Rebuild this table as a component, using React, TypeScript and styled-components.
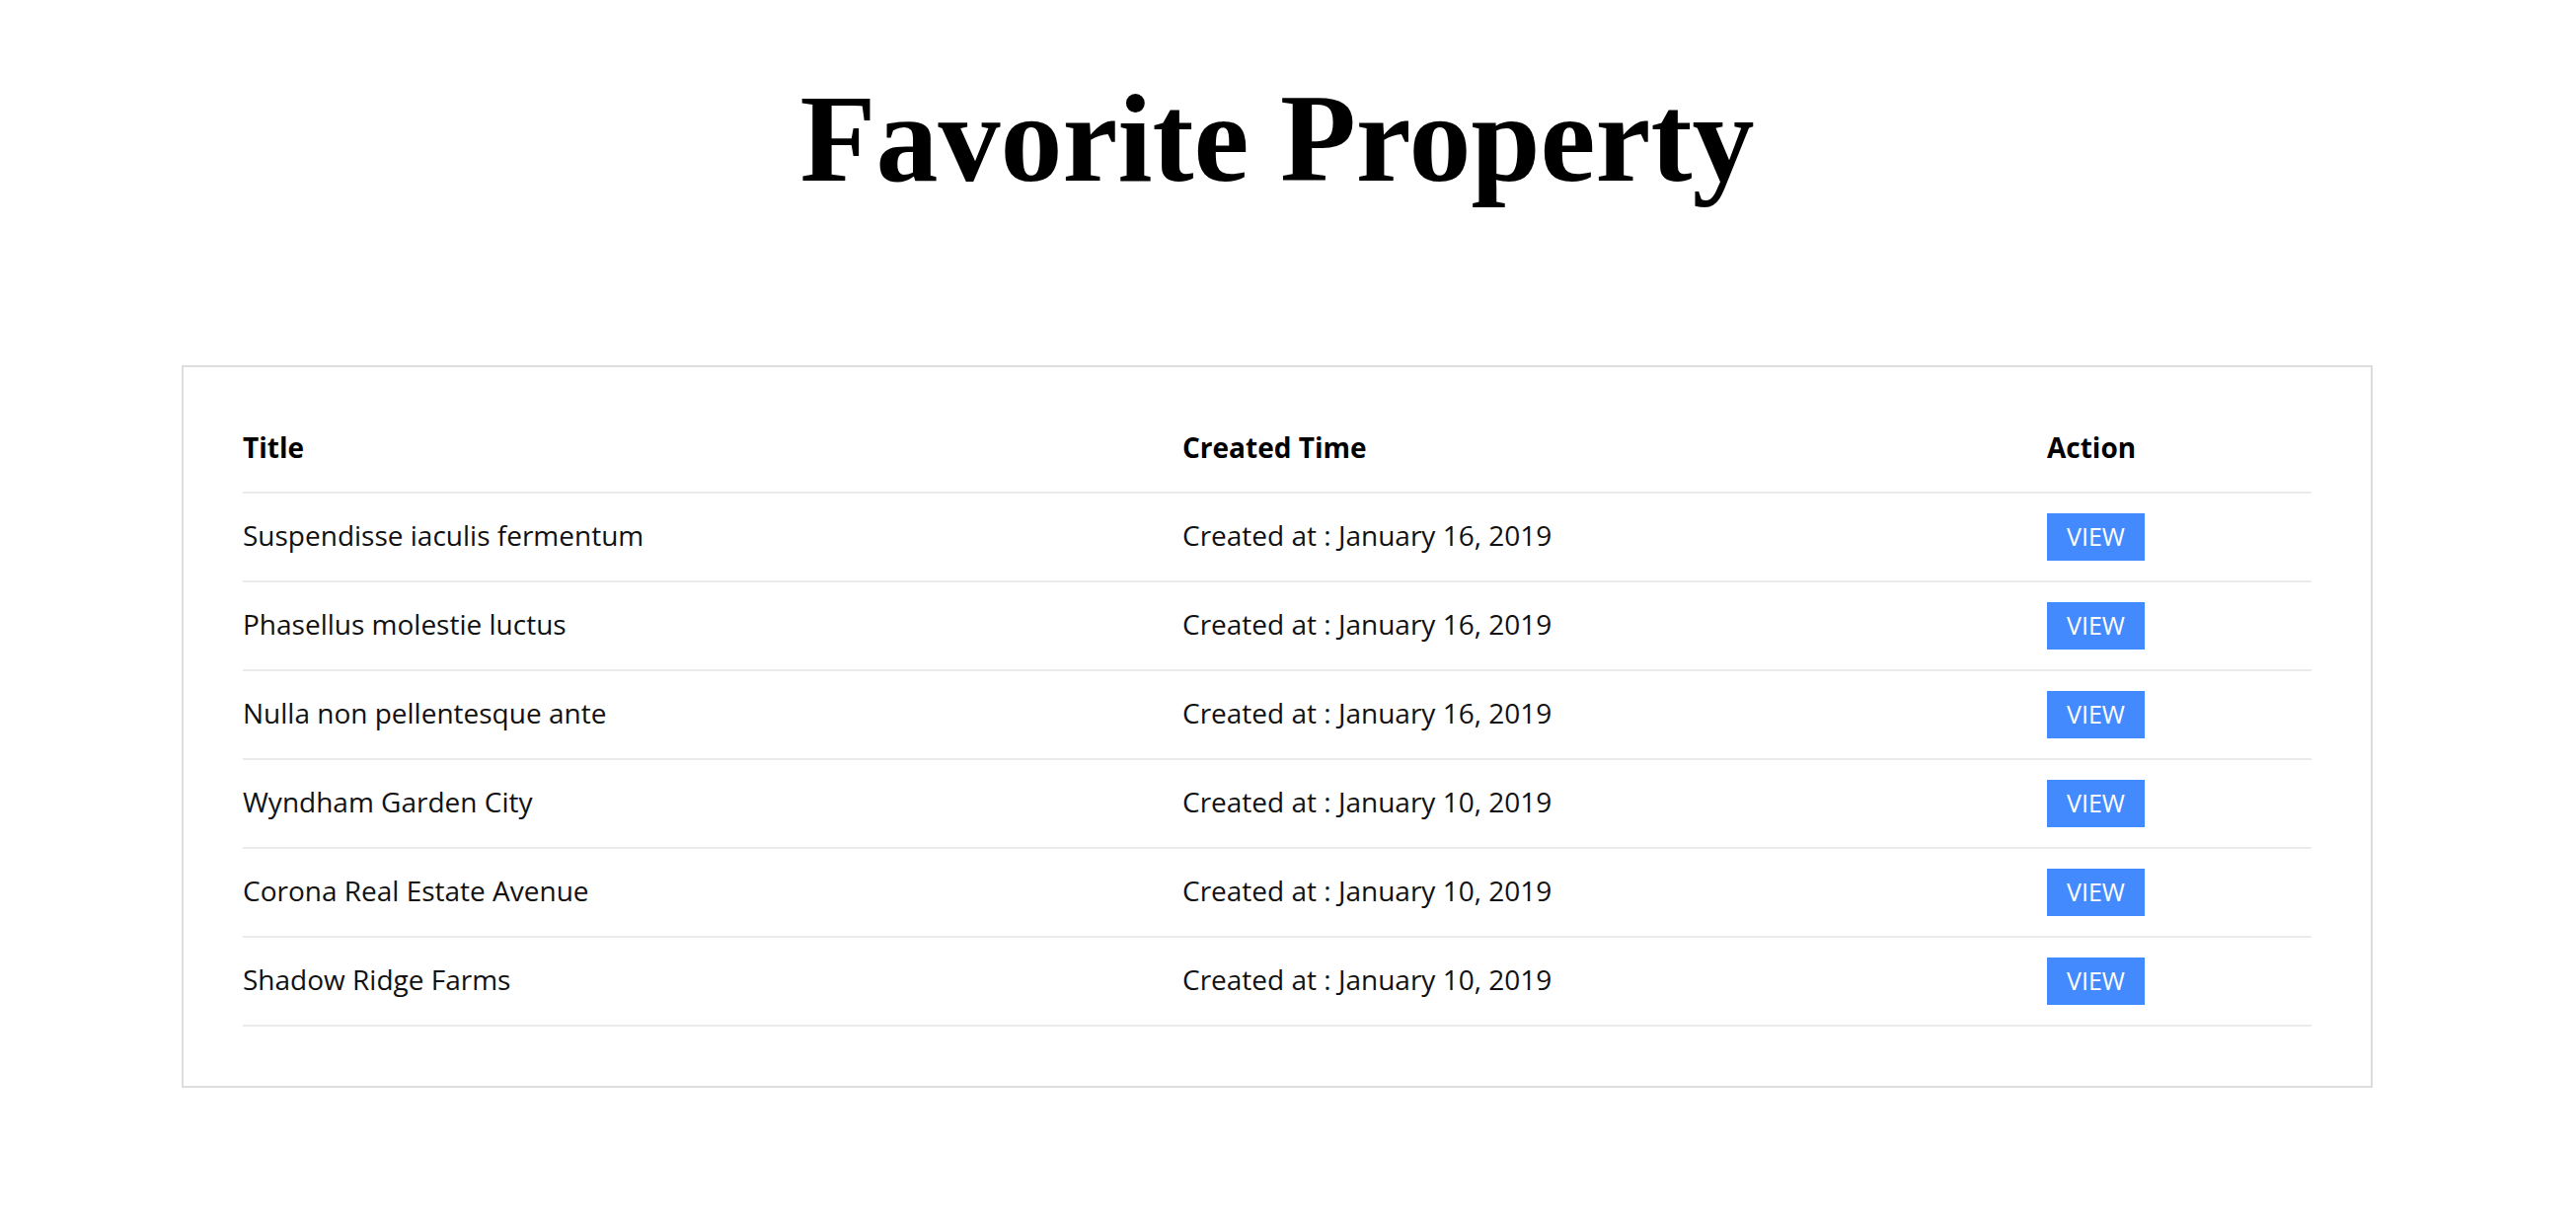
import React from "react";
import styled, { createGlobalStyle } from "styled-components";

const GlobalStyle = createGlobalStyle`
  html, body {
    margin: 0;
    padding: 0;
    background: #ffffff;
  }
  body {
    font-family: "Open Sans", "Noto Sans", sans-serif;
    color: #111111;
  }
`;

const Page = styled.main`
  width: 2588px;
  padding-top: 78px;
  padding-bottom: 140px;
  display: flex;
  flex-direction: column;
  align-items: center;
`;

const Heading = styled.h1`
  margin: 0;
  font-family: "Liberation Serif", "Times New Roman", serif;
  font-weight: 700;
  font-size: 126px;
  line-height: 126px;
  color: #000000;
  letter-spacing: 0;
`;

const Card = styled.section`
  margin-top: 166px;
  width: 2220px;
  box-sizing: border-box;
  border: 2px solid #dddddd;
  padding: 36px 60px 60px;
`;

const Row = styled.div<{ $head?: boolean }>`
  display: grid;
  grid-template-columns: 952px 876px 268px;
  align-items: baseline;
  border-bottom: 2px solid #ebebeb;
  padding: ${(p) => (p.$head ? "26px 0" : "20px 0")};
`;

const HeadCell = styled.div`
  font-size: 28px;
  line-height: 38px;
  font-weight: 700;
  color: #000000;
`;

const Cell = styled.div`
  font-size: 28px;
  line-height: 38px;
  font-weight: 400;
  color: #111111;
`;

const ViewButton = styled.button`
  display: inline-block;
  box-sizing: border-box;
  height: 48px;
  padding: 0 20px 2px;
  border: none;
  border-radius: 0;
  background: #448aff;
  color: #ffffff;
  font-family: "Open Sans", "Noto Sans", sans-serif;
  font-size: 25px;
  line-height: 46px;
  font-weight: 400;
  text-transform: uppercase;
  cursor: pointer;
`;

const rows = [
  { title: "Suspendisse iaculis fermentum", date: "January 16, 2019" },
  { title: "Phasellus molestie luctus", date: "January 16, 2019" },
  { title: "Nulla non pellentesque ante", date: "January 16, 2019" },
  { title: "Wyndham Garden City", date: "January 10, 2019" },
  { title: "Corona Real Estate Avenue", date: "January 10, 2019" },
  { title: "Shadow Ridge Farms", date: "January 10, 2019" },
];

export default function App() {
  return (
    <>
      <GlobalStyle />
      <Page>
        <Heading>Favorite Property</Heading>
        <Card>
          <Row $head>
            <HeadCell>Title</HeadCell>
            <HeadCell>Created Time</HeadCell>
            <HeadCell>Action</HeadCell>
          </Row>
          {rows.map((r) => (
            <Row key={r.title}>
              <Cell>{r.title}</Cell>
              <Cell>Created at : {r.date}</Cell>
              <Cell>
                <ViewButton>View</ViewButton>
              </Cell>
            </Row>
          ))}
        </Card>
      </Page>
    </>
  );
}
